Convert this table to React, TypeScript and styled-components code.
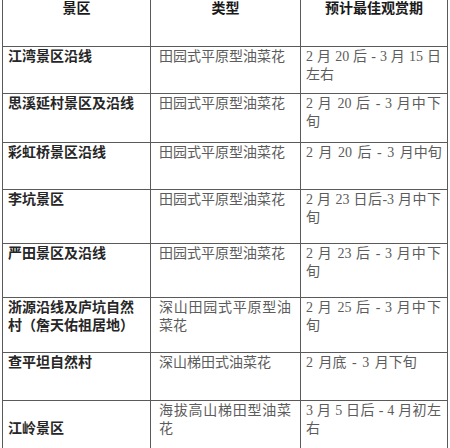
import React from "react";
import styled, { createGlobalStyle } from "styled-components";

const GlobalStyle = createGlobalStyle`
  html, body { margin: 0; padding: 0; background: #ffffff; }
  body { font-family: "Liberation Serif", "Noto Sans CJK SC", sans-serif; }
`;

const Page = styled.div`
  width: 450px;
  height: 448px;
  overflow: hidden;
  padding-left: 2px;
  box-sizing: border-box;
  background: #fff;
`;

const Table = styled.div`
  display: flex;
  flex-direction: column;
  width: 446px;
`;

const Row = styled.div<{ $h: number }>`
  display: grid;
  grid-template-columns: 149px 150px 147px;
  height: ${(p) => p.$h}px;
`;

const Cell = styled.div<{ $col: number; $middle?: boolean; $head?: boolean }>`
  box-sizing: border-box;
  border-bottom: 1px solid #5a5a5a;
  border-right: 1px solid #5a5a5a;
  border-left: ${(p) => (p.$col === 0 ? "1px solid #5a5a5a" : "none")};
  font-size: 14px;
  line-height: 17.5px;
  padding: ${(p) =>
    p.$head
      ? "0 4px"
      : p.$col === 0
      ? "1px 4px 0 5px"
      : p.$col === 1
      ? "1px 9px 0 8px"
      : "1px 6px 0 5px"};
  font-weight: ${(p) => (p.$head || p.$col === 0 ? 700 : 400)};
  color: ${(p) => (p.$head ? "#1a1a1a" : p.$col === 0 ? "#262626" : "#5c5c5c")};
  text-align: ${(p) => (p.$head ? "center" : "left")};
  display: flex;
  flex-direction: column;
  justify-content: ${(p) => (p.$middle ? "center" : "flex-start")};
  white-space: nowrap;
`;

const Line = styled.span<{ $justify?: boolean; $spaced?: boolean }>`
  display: block;
  text-align: left;
  text-align-last: ${(p) => (p.$justify ? "justify" : "auto")};
  word-spacing: ${(p) => (p.$spaced ? "2px" : "normal")};
`;

type RowData = {
  h: number;
  cells: string[][];
  middleFirst?: boolean;
};

const rows: RowData[] = [
  { h: 47, cells: [["江湾景区沿线"], ["田园式平原型油菜花"], ["2 月 20 后 - 3 月 15 日", "左右"]] },
  { h: 49, cells: [["思溪延村景区及沿线"], ["田园式平原型油菜花"], ["2 月 20 后 - 3 月中下", "旬"]] },
  { h: 47, cells: [["彩虹桥景区沿线"], ["田园式平原型油菜花"], ["2 月 20 后 - 3 月中旬"]] },
  { h: 54, cells: [["李坑景区"], ["田园式平原型油菜花"], ["2 月 23 日后-3 月中下", "旬"]] },
  { h: 54, cells: [["严田景区及沿线"], ["田园式平原型油菜花"], ["2 月 23 后 - 3 月中下", "旬"]] },
  {
    h: 55,
    cells: [
      ["浙源沿线及庐坑自然", "村（詹天佑祖居地）"],
      ["深山田园式平原型油", "菜花"],
      ["2 月 25 后 - 3 月中下", "旬"],
    ],
  },
  { h: 48, cells: [["查平坦自然村"], ["深山梯田式油菜花"], ["2 月底 - 3 月下旬"]] },
  {
    h: 56,
    middleFirst: true,
    cells: [["江岭景区"], ["海拔高山梯田型油菜", "花"], ["3 月 5 日后 - 4 月初左", "右"]],
  },
];

const headers = ["景区", "类型", "预计最佳观赏期"];

export default function App() {
  return (
    <Page>
      <GlobalStyle />
      <Table>
        <Row $h={47}>
          {headers.map((h, i) => (
            <Cell key={h} $col={i} $head>
              {h}
            </Cell>
          ))}
        </Row>
        {rows.map((r, ri) => (
          <Row key={ri} $h={r.h}>
            {r.cells.map((lines, ci) => {
              return (
                <Cell key={ci} $col={ci} $middle={ci === 0 && r.middleFirst}>
                  {lines.map((l, li) => {
                    const justify = ci > 0 && li < lines.length - 1;
                    return (
                      <Line key={li} $justify={justify} $spaced={ci === 2 && !justify}>
                        {l}
                      </Line>
                    );
                  })}
                </Cell>
              );
            })}
          </Row>
        ))}
      </Table>
    </Page>
  );
}
